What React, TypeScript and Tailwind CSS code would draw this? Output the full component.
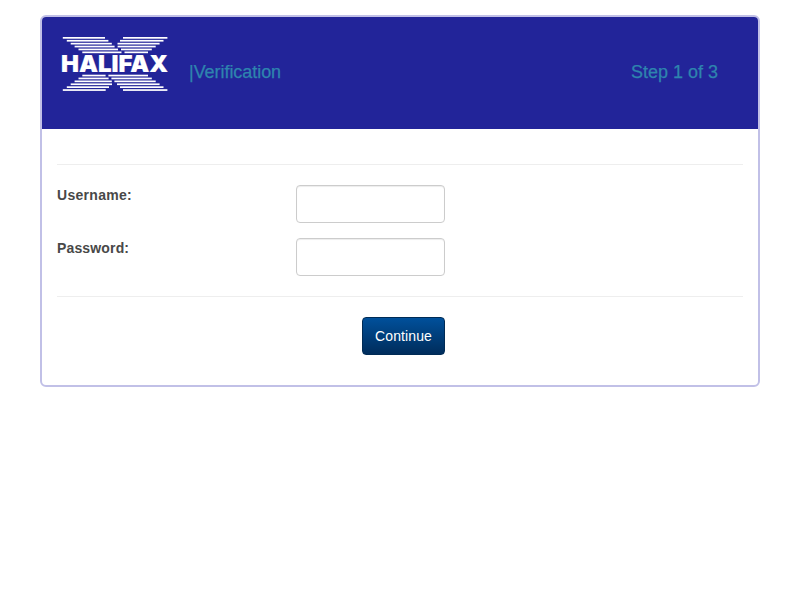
// Each stripe row: [left start, left end, right start, right end]
const upper = [
  [0.8, 43, 61, 105.4],
  [4.8, 46.4, 58, 101.5],
  [8.7, 49.8, 55.5, 97.6],
  [12.6, 52.6, 55.6, 93.7],
  [16.5, 56, 59, 89.8],
  [20.3, 59.5, 62.5, 86],
];
const lower = [
  [0.8, 43.7, 61, 105.4],
  [4.8, 47, 58, 101.5],
  [8.7, 50, 55, 97.6],
  [12.6, 49.8, 52.4, 93.7],
  [16.5, 46.6, 49.4, 89.8],
  [20.3, 43.6, 46.4, 86],
];

function Logo() {
  return (
    <svg width="108" height="56" viewBox="0 0 108 56" className="block overflow-visible" aria-label="Halifax">
      <g fill="#ffffff">
        {upper.map(([a, b, c, d], i) => (
          <g key={i}>
            <rect x={a} y={1 + i * 2.9} width={b - a} height="1.7" />
            <rect x={c} y={1 + i * 2.9} width={d - c} height="1.7" />
          </g>
        ))}
        {lower.map(([a, b, c, d], i) => (
          <g key={i}>
            <rect x={a} y={53.2 - i * 2.9} width={b - a} height="1.7" />
            <rect x={c} y={53.2 - i * 2.9} width={d - c} height="1.7" />
          </g>
        ))}
      </g>
      <text
        x="-1"
        y="35.7"
        textLength="107"
        lengthAdjust="spacingAndGlyphs"
        fill="#ffffff"
        stroke="#ffffff"
        strokeWidth="0.15"
        fontSize="23.3"
        className="font-['Inter','Liberation_Sans',sans-serif] font-black"
      >
        HALIFAX
      </text>
    </svg>
  );
}

function Field({ label, type, spacing }: { label: string; type: string; spacing: string }) {
  return (
    <div className="flex h-[38px]">
      <label className={`w-[239px] text-sm leading-5 font-bold text-[#484848] ${spacing}`}>{label}</label>
      <input
        type={type}
        aria-label={label}
        className="h-[38px] w-[149px] rounded-[4px] border border-[#cccccc] bg-white px-2 text-sm shadow-[inset_0_1px_1px_rgba(0,0,0,0.075)] outline-none"
      />
    </div>
  );
}

export default function App() {
  return (
    <div className="min-h-[600px] bg-white px-10 pt-[15px] font-['Liberation_Sans',Arial,sans-serif]">
      <main className="h-[372px] w-[720px] overflow-hidden rounded-[6px] border-2 border-[#c1c0e7]">
        <header className="flex h-[112px] bg-[#222499] pr-10 pl-5 text-[18px] leading-[20px] text-[#2e84ae] [-webkit-text-stroke:0.25px_#2e84ae]">
          <div className="pt-[19px] [-webkit-text-stroke:0px]">
            <Logo />
          </div>
          <span className="pt-[45px] pl-[19px] tracking-[-0.05px]">|Verification</span>
          <span className="ml-auto pt-[45px]">Step 1 of 3</span>
        </header>
        <div className="px-[15px] pt-[35px]">
          <hr className="border-t border-[#eeeeee]" />
          <form className="pt-5" onSubmit={(e) => e.preventDefault()}>
            <div className="flex flex-col gap-[15px]">
              <Field label="Username:" type="text" spacing="tracking-[0.3px]" />
              <Field label="Password:" type="password" spacing="tracking-[0.15px]" />
            </div>
            <hr className="mt-5 border-t border-[#eeeeee]" />
            <button
              type="button"
              className="mt-5 ml-[305px] block h-[38px] w-[83px] rounded-[4px] border border-[#002b55] bg-linear-to-b from-[#00509b] to-[#002d5c] text-sm tracking-[0.1px] text-white"
            >
              Continue
            </button>
          </form>
        </div>
      </main>
    </div>
  );
}
